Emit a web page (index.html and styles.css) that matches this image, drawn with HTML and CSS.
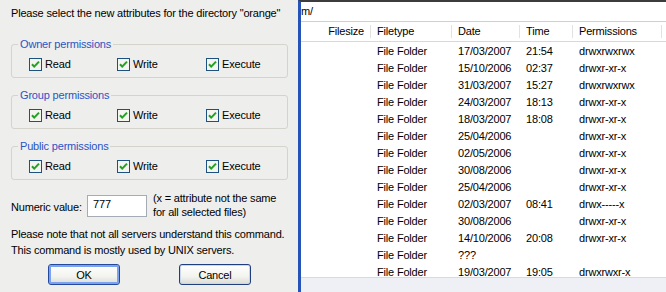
FILE: index.html
```html
<!DOCTYPE html>
<html lang="en">
<head>
    <meta charset="UTF-8">
    <title>Change file attributes</title>
    <link rel="stylesheet" href="styles.css">
</head>
<body>
    <div class="screen">
        <div class="dialog">
            <p class="prompt">Please select the new attributes for the directory "orange"</p>

            <fieldset class="perm-group">
                <legend>Owner permissions</legend>
                <div class="perm-row">
                    <label class="check"><svg class="box" width="13" height="13" viewBox="0 0 13 13"><rect x="0.5" y="0.5" width="12" height="12" fill="#f4f4f0" stroke="#1c5180"/><path d="M3 6.2 L5.2 8.6 L10 3.6" fill="none" stroke="#21a121" stroke-width="2"/></svg>Read</label>
                    <label class="check"><svg class="box" width="13" height="13" viewBox="0 0 13 13"><rect x="0.5" y="0.5" width="12" height="12" fill="#f4f4f0" stroke="#1c5180"/><path d="M3 6.2 L5.2 8.6 L10 3.6" fill="none" stroke="#21a121" stroke-width="2"/></svg>Write</label>
                    <label class="check"><svg class="box" width="13" height="13" viewBox="0 0 13 13"><rect x="0.5" y="0.5" width="12" height="12" fill="#f4f4f0" stroke="#1c5180"/><path d="M3 6.2 L5.2 8.6 L10 3.6" fill="none" stroke="#21a121" stroke-width="2"/></svg>Execute</label>
                </div>
            </fieldset>

            <fieldset class="perm-group">
                <legend>Group permissions</legend>
                <div class="perm-row">
                    <label class="check"><svg class="box" width="13" height="13" viewBox="0 0 13 13"><rect x="0.5" y="0.5" width="12" height="12" fill="#f4f4f0" stroke="#1c5180"/><path d="M3 6.2 L5.2 8.6 L10 3.6" fill="none" stroke="#21a121" stroke-width="2"/></svg>Read</label>
                    <label class="check"><svg class="box" width="13" height="13" viewBox="0 0 13 13"><rect x="0.5" y="0.5" width="12" height="12" fill="#f4f4f0" stroke="#1c5180"/><path d="M3 6.2 L5.2 8.6 L10 3.6" fill="none" stroke="#21a121" stroke-width="2"/></svg>Write</label>
                    <label class="check"><svg class="box" width="13" height="13" viewBox="0 0 13 13"><rect x="0.5" y="0.5" width="12" height="12" fill="#f4f4f0" stroke="#1c5180"/><path d="M3 6.2 L5.2 8.6 L10 3.6" fill="none" stroke="#21a121" stroke-width="2"/></svg>Execute</label>
                </div>
            </fieldset>

            <fieldset class="perm-group">
                <legend>Public permissions</legend>
                <div class="perm-row">
                    <label class="check"><svg class="box" width="13" height="13" viewBox="0 0 13 13"><rect x="0.5" y="0.5" width="12" height="12" fill="#f4f4f0" stroke="#1c5180"/><path d="M3 6.2 L5.2 8.6 L10 3.6" fill="none" stroke="#21a121" stroke-width="2"/></svg>Read</label>
                    <label class="check"><svg class="box" width="13" height="13" viewBox="0 0 13 13"><rect x="0.5" y="0.5" width="12" height="12" fill="#f4f4f0" stroke="#1c5180"/><path d="M3 6.2 L5.2 8.6 L10 3.6" fill="none" stroke="#21a121" stroke-width="2"/></svg>Write</label>
                    <label class="check"><svg class="box" width="13" height="13" viewBox="0 0 13 13"><rect x="0.5" y="0.5" width="12" height="12" fill="#f4f4f0" stroke="#1c5180"/><path d="M3 6.2 L5.2 8.6 L10 3.6" fill="none" stroke="#21a121" stroke-width="2"/></svg>Execute</label>
                </div>
            </fieldset>

            <div class="numeric">
                <span class="numeric-label">Numeric value:</span>
                <div class="numeric-input">777</div>
                <span class="numeric-hint">(x = attribute not the same<br>for all selected files)</span>
            </div>

            <p class="note">Please note that not all servers understand this command.<br>This command is mostly used by UNIX servers.</p>

            <div class="buttons">
                <button class="btn btn-default">OK</button>
                <button class="btn">Cancel</button>
            </div>
        </div>

        <div class="listing">
            <div class="address">m/</div>
            <div class="list-head">
                <div class="head-cell size">Filesize</div>
                <div class="head-cell">Filetype</div>
                <div class="head-cell">Date</div>
                <div class="head-cell">Time</div>
                <div class="head-cell">Permissions</div>
                <div class="head-cell last"></div>
            </div>
            <div class="list-body">
                <div class="row"><span></span><span>File Folder</span><span>17/03/2007</span><span>21:54</span><span>drwxrwxrwx</span></div>
                <div class="row"><span></span><span>File Folder</span><span>15/10/2006</span><span>02:37</span><span>drwxr-xr-x</span></div>
                <div class="row"><span></span><span>File Folder</span><span>31/03/2007</span><span>15:27</span><span>drwxrwxrwx</span></div>
                <div class="row"><span></span><span>File Folder</span><span>24/03/2007</span><span>18:13</span><span>drwxr-xr-x</span></div>
                <div class="row"><span></span><span>File Folder</span><span>18/03/2007</span><span>18:08</span><span>drwxr-xr-x</span></div>
                <div class="row"><span></span><span>File Folder</span><span>25/04/2006</span><span></span><span>drwxr-xr-x</span></div>
                <div class="row"><span></span><span>File Folder</span><span>02/05/2006</span><span></span><span>drwxr-xr-x</span></div>
                <div class="row"><span></span><span>File Folder</span><span>30/08/2006</span><span></span><span>drwxr-xr-x</span></div>
                <div class="row"><span></span><span>File Folder</span><span>25/04/2006</span><span></span><span>drwxr-xr-x</span></div>
                <div class="row"><span></span><span>File Folder</span><span>02/03/2007</span><span>08:41</span><span>drwx-----x</span></div>
                <div class="row"><span></span><span>File Folder</span><span>30/08/2006</span><span></span><span>drwxr-xr-x</span></div>
                <div class="row"><span></span><span>File Folder</span><span>14/10/2006</span><span>20:08</span><span>drwxr-xr-x</span></div>
                <div class="row"><span></span><span>File Folder</span><span>???</span><span></span><span></span></div>
                <div class="row"><span></span><span>File Folder</span><span>19/03/2007</span><span>19:05</span><span>drwxrwxr-x</span></div>
            </div>
            <div class="status-band"></div>
        </div>
    </div>
</body>
</html>
```

FILE: styles.css
```css
:root {
    --dialog-bg: #eeeeec;
    --group-border: #d4d4cc;
    --group-label: #2b54c4;
    --frame-blue: #2553b8;
    --text: #000000;
}

body {
    margin: 0;
    width: 666px;
    height: 292px;
    overflow: hidden;
    font-family: 'Liberation Sans', Arial, sans-serif;
    font-size: 11px;
    letter-spacing: -0.18px;
    color: var(--text);
}

.screen {
    display: flex;
    height: 292px;
}

/* dialog */

.dialog {
    width: 298px;
    flex: none;
    box-sizing: border-box;
    padding: 7px 10px 0 11px;
    background: var(--dialog-bg);
}

.prompt {
    margin: 0;
    line-height: 13px;
    white-space: nowrap;
}

.perm-group {
    margin: 18px 0 0;
    padding: 7px 0 6px 17px;
    border: 1px solid var(--group-border);
    border-radius: 3px;
}

.perm-group + .perm-group {
    margin-top: 11px;
}

.perm-group legend {
    margin-left: -11px;
    padding: 0 2px;
    line-height: 13px;
    color: var(--group-label);
}

.perm-row {
    display: grid;
    grid-template-columns: 88px 89px 1fr;
    height: 13px;
}

.check {
    display: flex;
    align-items: center;
    gap: 3px;
    line-height: 13px;
}

.check .box {
    flex: none;
    display: block;
}

.numeric {
    display: flex;
    align-items: center;
    margin-top: 12px;
}

.numeric-label {
    width: 76px;
    margin-top: 3px;
}

.numeric-input {
    width: 60px;
    height: 22px;
    box-sizing: border-box;
    padding: 2px 0 0 5px;
    border: 1px solid #a5acb5;
    background: #ffffff;
    line-height: 13px;
}

.numeric-hint {
    margin-left: 6px;
    line-height: 13.5px;
}

.note {
    margin: 7px 0 0;
    line-height: 16px;
    white-space: nowrap;
}

.buttons {
    display: flex;
    gap: 59px;
    margin-top: 6px;
    padding-left: 37px;
}

.btn {
    width: 72px;
    height: 21px;
    padding: 0;
    font: inherit;
    letter-spacing: inherit;
    color: var(--text);
    border: 1px solid #1f3f7e;
    border-radius: 3px;
    background: linear-gradient(#ffffff, #f3f3ef 60%, #dcdcd6);
    box-shadow: inset 0 0 0 1px #c8d6f0;
}

.btn-default {
    border-color: #24489a;
    box-shadow: inset 0 0 0 2px #7aa2ee;
}

/* file listing */

.listing {
    flex: 1;
    display: flex;
    flex-direction: column;
    border-left: 3px solid var(--frame-blue);
    border-top: 2px solid #3c3c3c;
    background: #ffffff;
    min-width: 0;
}

.address {
    height: 19px;
    line-height: 19px;
    border-bottom: 1px solid #cfcfcf;
    white-space: nowrap;
}

.list-head,
.row {
    display: grid;
    grid-template-columns: 70px 81px 68px 53px 89px 1fr;
}

.list-head {
    height: 19px;
    border-bottom: 1px solid #d8d8d8;
    align-items: center;
}

.head-cell {
    padding-left: 6px;
    line-height: 13px;
    border-right: 1px solid #e2e2e2;
    white-space: nowrap;
}

.head-cell.size {
    padding: 0 6px 0 0;
    text-align: right;
}

.head-cell.last {
    border-right: none;
}

.list-body {
    flex: 1;
    overflow: hidden;
    padding-top: 1px;
}

.row {
    height: 17px;
    line-height: 17px;
    white-space: nowrap;
}

.row span {
    padding-left: 6px;
}

.status-band {
    height: 14px;
    flex: none;
    border-top: 1px solid #d6dae2;
    background: #eef0f5;
}
```
